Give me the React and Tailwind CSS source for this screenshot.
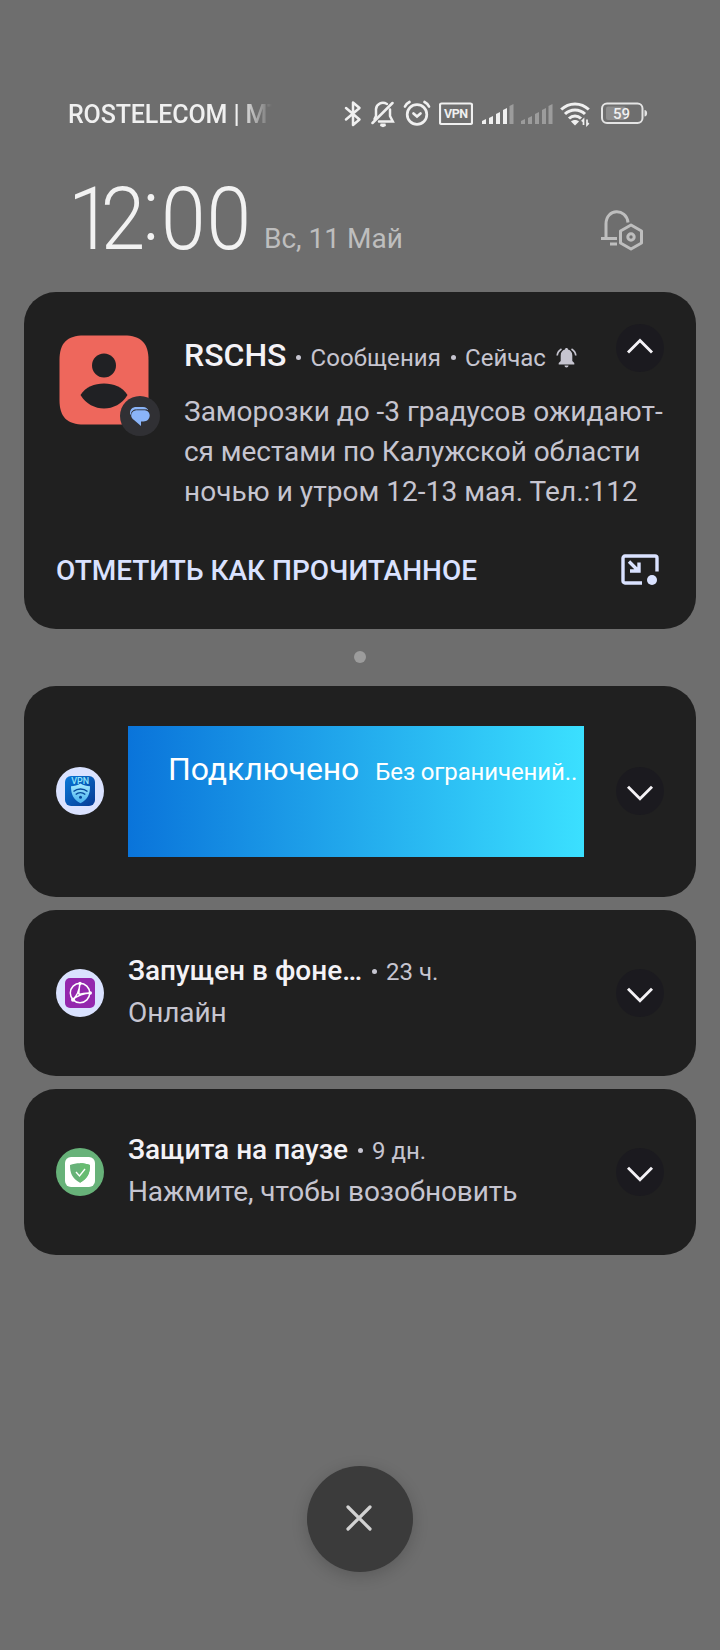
const SIGNAL_BARS = [
  { x: 0, y: 19, h: 5 },
  { x: 7, y: 16, h: 8 },
  { x: 14, y: 12, h: 12 },
  { x: 21, y: 8, h: 16 },
  { x: 27.5, y: 4, h: 20 },
];

function Signal({ level }) {
  return (
    <svg width="32" height="28" viewBox="0 0 32 28">
      {SIGNAL_BARS.map((bar, idx) => (
        <path
          key={bar.x}
          d={`M${bar.x} ${bar.y + 2}l4 -2v${bar.h}h-4z`}
          fill={idx < level ? '#f0f0f0' : '#9c9c9c'}
        />
      ))}
    </svg>
  );
}

function StatusIcons() {
  return (
    <div className="flex items-center">
      <svg className="mr-[9px]" width="18" height="28" viewBox="0 0 18 28" fill="none" stroke="#f0f0f0" strokeWidth="2.5" strokeLinejoin="round" strokeLinecap="round">
        <path d="M2 8l13.500 11.500L9 25V2.500l6.500 5.500L2 19.500" />
      </svg>

      <svg className="mr-[7px]" width="25" height="28" viewBox="0 0 25 28" fill="none" stroke="#f0f0f0" strokeWidth="2.500" strokeLinecap="round">
        <path d="M1.500 23L21.500 3" />
        <path d="M16 4C10.500 1 5.500 4.500 5 9v7l-1.500 3" />
        <path d="M19 9.500V16l2.800 5.500H8" />
        <path d="M9.500 24.800h5l-2.500 1z" />
      </svg>

      <svg className="mr-[8px]" width="28" height="28" viewBox="0 0 28 28" fill="none" stroke="#f0f0f0" strokeWidth="2.700" strokeLinecap="round">
        <circle cx="14" cy="14.500" r="9.800" />
        <path d="M2 6.500C3 4.500 4.500 3 6.500 2M26 6.500C25 4.500 23.500 3 21.500 2M10.500 13.500l3.500 3 3.500-3" />
      </svg>

      <svg className="mr-[9px]" width="34" height="28" viewBox="0 0 34 28">
        <rect x="1" y="3.500" width="32" height="20.500" rx="1.500" fill="none" stroke="#f0f0f0" strokeWidth="2.200" />
        <text x="17" y="18.200" textAnchor="middle" textLength="24" fill="#f0f0f0" className="font-[Roboto,sans-serif] text-[12.500px] font-bold">
          VPN
        </text>
      </svg>

      <div className="mr-[7px]"><Signal level={4} /></div>
      <div className="mr-[7px]"><Signal level={0} /></div>

      <svg className="mr-[10px]" width="31" height="28" viewBox="0 0 31 28" fill="none" stroke="#f0f0f0" strokeWidth="3">
        <path d="M1.200 9.500C9 2 21 2 28.800 9.500" />
        <path d="M5 14c5.500-5.500 14.500-5.500 20 0" />
        <path d="M9 18.500c3.500-3.500 8.500-3.500 12 0" />
        <path d="M11 21.500c2-2 6-2 8 0L15 25.500z" fill="#f0f0f0" stroke="none" />
        <path d="M23.500 25v-5.500l-1.800 1.800M27 19.500V25l1.800-1.800" strokeWidth="1.700" />
      </svg>

      <svg width="47" height="28" viewBox="0 0 47 28">
        <rect x="1" y="3.500" width="40.500" height="19.500" rx="5" fill="none" stroke="#e4e4e4" strokeWidth="2" />
        <rect x="5" y="6.500" width="20" height="13.500" rx="2" fill="#8c8c8c" />
        <path d="M43.500 10c3.500 0 3.500 6.500 0 6.500z" fill="#e4e4e4" />
        <text x="20.500" y="18.700" textAnchor="middle" fill="#f0f0f0" className="font-[Roboto,sans-serif] text-[15px] font-medium">
          59
        </text>
      </svg>
    </div>
  );
}

function Chevron({ up }) {
  return (
    <div className="flex h-12 w-12 shrink-0 items-center justify-center rounded-full bg-[#1b1a1f]">
      <svg width="48" height="48" viewBox="0 0 48 48" fill="none" stroke="#f4f2f6" strokeWidth="2.900">
        <path d={up ? 'M12 28.500L24 16.500l12 12' : 'M12 19.800l12 12 12-12'} />
      </svg>
    </div>
  );
}

function Dot() {
  return <span className="mx-[9.5px] inline-block h-[5px] w-[5px] shrink-0 -translate-y-[6px] rounded-full bg-[#c6c5d0]" />;
}

function VpnIcon() {
  return (
    <svg width="48" height="48" viewBox="0 0 48 48">
      <defs>
        <linearGradient id="vpn-bg" x1="0" y1="0" x2="1" y2="1">
          <stop offset="0" stopColor="#0a78d8" />
          <stop offset="1" stopColor="#053a94" />
        </linearGradient>
        <linearGradient id="vpn-shield" x1="0" y1="0" x2="0" y2="1">
          <stop offset="0" stopColor="#a8ecff" />
          <stop offset="1" stopColor="#46b0ee" />
        </linearGradient>
      </defs>
      <circle cx="24" cy="24" r="24" fill="#dae2ff" />
      <rect x="9" y="9" width="30" height="30" rx="6" fill="url(#vpn-bg)" />
      <text x="24.200" y="16.600" textAnchor="middle" textLength="18" fill="#8fe4fb" className="font-[Roboto,sans-serif] text-[9px] font-medium">
        VPN
      </text>
      <path d="M24.500 16.500c3 2 6 2.700 9.500 2.700 0 8-2 13-9.500 17-7.500-4-9.500-9-9.500-17 3.500 0 6.500-.7 9.500-2.700z" fill="url(#vpn-shield)" />
      <g fill="none" stroke="#064a9c" strokeWidth="1.500">
        <path d="M17.500 24.500c4-3.300 10-3.300 14 0M19.700 27.500c2.700-2.200 6.800-2.200 9.600 0" />
      </g>
      <circle cx="24.500" cy="30.300" r="1.500" fill="#064a9c" />
    </svg>
  );
}

function OrbitIcon() {
  return (
    <svg width="48" height="48" viewBox="0 0 48 48">
      <circle cx="24" cy="24" r="24" fill="#dae2ff" />
      <rect x="9" y="9" width="30" height="30" rx="5" fill="#9427ad" />
      <g fill="none" stroke="#fff" strokeWidth="1.500">
        <circle cx="24" cy="24" r="9.700" />
        <path d="M24 14.500c-.5 6-1.500 11-7.500 16.500M24 14.500c-1 4-1 7-1.200 11M35 24c-4 .3-8 .5-12.200 1.500M35 24c-7 0-13 2-18.500 7" />
      </g>
      <circle cx="24" cy="14.500" r="1.700" fill="#fff" />
      <circle cx="34.300" cy="24" r="1.700" fill="#fff" />
      <circle cx="17" cy="30.700" r="2" fill="#fff" />
    </svg>
  );
}

function ShieldIcon() {
  return (
    <svg width="48" height="48" viewBox="0 0 48 48">
      <circle cx="24" cy="24" r="24" fill="#67b279" />
      <rect x="9" y="9" width="30" height="30" rx="6" fill="#fff" />
      <path d="M24 15.300c3.500 0 7 .6 10 1.800 0 8-2 13.500-10 17.700-8-4.200-10-9.700-10-17.700 3-1.200 6.500-1.800 10-1.800z" fill="#67b279" />
      <path d="M24 15.300c3.500 0 7 .6 10 1.800 0 8-2 13.500-10 17.700z" fill="#68bc71" />
      <path d="M20 24l3.500 4 5.500-7" fill="none" stroke="#fff" strokeWidth="1.400" />
    </svg>
  );
}

function Notification({ icon, title, time, text }) {
  return (
    <div className="flex h-[166px] items-center rounded-[32px] bg-[#202020] px-8">
      {icon}
      <div className="ml-6 flex-1 pb-[3px]">
        <div className="flex items-baseline leading-[42px]">
          <span className="text-[28px] font-medium text-[#f4f2f6]">{title}</span>
          <Dot />
          <span className="text-2xl text-[#c6c5d0]">{time}</span>
        </div>
        <p className="text-[28px] leading-[42px] tracking-[-0.1px] text-[#c6c5d0]">{text}</p>
      </div>
      <Chevron />
    </div>
  );
}

export default function App() {
  return (
    <div className="flex h-[1650px] w-[720px] flex-col overflow-hidden bg-[#6e6e6e] px-6 pt-[100px] font-[Roboto,sans-serif]">
      <div className="flex h-7 items-center justify-between pr-[48px] pl-[44px]">
        <div className="w-[230px] pt-[2px] text-[25px] leading-[30px] font-medium tracking-[-0.12px] whitespace-nowrap text-[#f0f0f0] [mask-image:linear-gradient(to_right,#000_172px,transparent_204px)]">
          ROSTELECOM | MT
        </div>
        <StatusIcons />
      </div>

      <div className="mt-[47px] flex h-[88px] items-baseline pl-[44px]">
        <span className="w-[188px] origin-left scale-x-[0.912] text-[88px] leading-[88px] font-light tracking-[-3px] whitespace-nowrap text-[#f2f2f2]">
          <span className="tracking-[-13px]">1</span>2
          <span className="mr-[5px] inline-block -translate-y-[9px]">:</span>
          <span className="tracking-[1px]">0</span>0
        </span>
        <span className="ml-2 -translate-y-[1px] text-[28px] text-[#bebebe]">Вс, 11 Май</span>
        <svg className="mt-[21px] mr-[52px] ml-auto self-center" width="44" height="42" viewBox="0 0 44 42" fill="none" stroke="#bebebe" strokeWidth="3">
          <path d="M1 28.500h16M6 28V14C6 -2 26.500 -2 28 12.500" transform="translate(0 1)" />
          <path d="M10 35h7" />
          <path d="M31 17l10.500 6v12L31 41l-10.500-6V23z" transform="translate(0 -1)" strokeLinejoin="round" />
          <circle cx="31" cy="28" r="3.200" />
        </svg>
      </div>

      <div className="mt-[29px] h-[337px] rounded-[32px] bg-[#202020] px-8 pt-8">
        <div className="flex">
          <div className="relative mt-[11px] ml-[3px] h-[90px] w-[90px] shrink-0">
            <svg width="90" height="90" viewBox="0 0 90 90">
              <path d="M25 .5H65C82 .5 89.500 8 89.500 25V65C89.500 82 82 89.500 65 89.500H25C8 89.500 .5 82 .5 65V25C.5 8 8 .5 25 .5z" fill="#ee675c" />
              <circle cx="45" cy="30.500" r="12" fill="#202124" />
              <path d="M21.500 60c5-8 14-11.500 23.500-11.500S63.500 52 68.500 60C63 69 54 73.500 45 73.500S27 69 21.500 60z" fill="#202124" />
            </svg>
            <svg className="absolute top-[61px] left-[61px]" width="40" height="40" viewBox="0 0 40 40">
              <circle cx="20" cy="20" r="20" fill="#303034" />
              <path d="M10 17c0-4 3-6 6-6h7c3 0 4.500 1.500 5 3H16c-3 0-5 2-5 5-.6-.5-1-1-1-2z" fill="#8ab4f8" />
              <path d="M17 14h6.500c4 0 6.200 2.500 6.200 5.500s-2.500 6-6.200 6h-2.500V30L14 24c-2-1.500-2.800-3-2.800-4.500 0-3 2.600-5.500 5.800-5.500z" fill="#8ab4f8" />
              <path d="M11.500 16.500c1-1.700 2.500-2.700 5-2.700H27" fill="none" stroke="#303034" strokeWidth=".9" />
            </svg>
          </div>

          <div className="ml-[35px] min-w-0 flex-1">
            <div className="flex justify-between">
              <div className="mt-[11px] flex items-baseline leading-10 whitespace-nowrap">
                <span className="text-[32px] font-medium text-[#f4f2f6]">RSCHS</span>
                <Dot />
                <span className="text-2xl tracking-[0.1px] text-[#c6c5d0]">Сообщения</span>
                <Dot />
                <span className="text-2xl text-[#c6c5d0]">Сейчас</span>
                <svg className="ml-[10px] translate-y-[2px]" width="21" height="21" viewBox="0 0 21 21" fill="#c6c5d0">
                  <path d="M10.500 1c1 0 1.500.7 1.500 1.600 2.800.8 4.300 3 4.300 5.900v5.500l2 2V17.500H2.700V16l2-2V8.500c0-2.900 1.500-5.100 4.300-5.900C9 1.700 9.500 1 10.500 1zM8.500 18.500h4c0 1.300-.9 2-2 2s-2-.7-2-2z" />
                  <path d="M5.500 2C3 3.500 1.500 5.500 1.200 8.500M15.500 2C18 3.500 19.500 5.500 19.800 8.500" fill="none" stroke="#c6c5d0" strokeWidth="1.700" />
                </svg>
              </div>
              <Chevron up />
            </div>
            <p className="mt-[17px] text-[28px] leading-10 whitespace-nowrap text-[#c6c5d0]">
              Заморозки до -3 градусов ожидают-
              <br />
              <span className="tracking-[-0.06px]">ся местами по Калужской области</span>
              <br />
              <span className="tracking-[0.05px]">ночью и утром 12-13 мая. Тел.:112</span>
            </p>
          </div>
        </div>

        <div className="mt-[38px] flex h-10 items-center justify-between">
          <button className="translate-y-[1px] text-[28px] leading-10 font-medium text-[#dae2ff]">ОТМЕТИТЬ КАК ПРОЧИТАННОЕ</button>
          <svg className="mr-[5px]" width="38" height="32" viewBox="0 0 38 32" fill="none" stroke="#dae2ff" strokeWidth="3.400">
            <path d="M21 29H4a2 2 0 0 1-2-2V4a2 2 0 0 1 2-2h30a2 2 0 0 1 2 2v13.500" />
            <path d="M8 7.500l9 9M18 8.500V17H9" />
            <circle cx="31" cy="26" r="5" fill="#dae2ff" stroke="none" />
          </svg>
        </div>
      </div>

      <div className="mx-auto mt-[22px] h-3 w-3 shrink-0 rounded-full bg-[#9c9c9c]" />

      <div className="mt-[23px] flex flex-col gap-[13px]">
        <div className="flex h-[211px] items-center rounded-[32px] bg-[#202020] px-8 pb-[1px]">
          <VpnIcon />
          <div className="mt-[1px] ml-6 flex h-[131px] w-[456px] items-baseline bg-linear-to-r/srgb from-[#0a74da] to-[#3be0ff] pt-[23px] pl-10 leading-10 whitespace-nowrap text-white">
            <span className="text-[32px] tracking-[-0.1px]">Подключено</span>
            <span className="ml-4 text-2xl tracking-[-0.12px]">Без ограничений..</span>
          </div>
          <div className="ml-8">
            <Chevron />
          </div>
        </div>
        <Notification icon={<OrbitIcon />} title="Запущен в фоне…" time="23 ч." text="Онлайн" />
        <Notification icon={<ShieldIcon />} title="Защита на паузе" time="9 дн." text="Нажмите, чтобы возобновить" />
      </div>

      <button className="mx-auto mt-[211px] flex h-[106px] w-[106px] shrink-0 items-center justify-center rounded-full bg-[#3b3b3b] pr-[2px] pb-[2px] shadow-[0_4px_16px_rgba(0,0,0,0.18)]">
        <svg width="26" height="26" viewBox="0 0 26 26" fill="none" stroke="#d2d2d2" strokeWidth="3.200" strokeLinecap="round">
          <path d="M2 2l22 22M24 2L2 24" />
        </svg>
      </button>
    </div>
  );
}
